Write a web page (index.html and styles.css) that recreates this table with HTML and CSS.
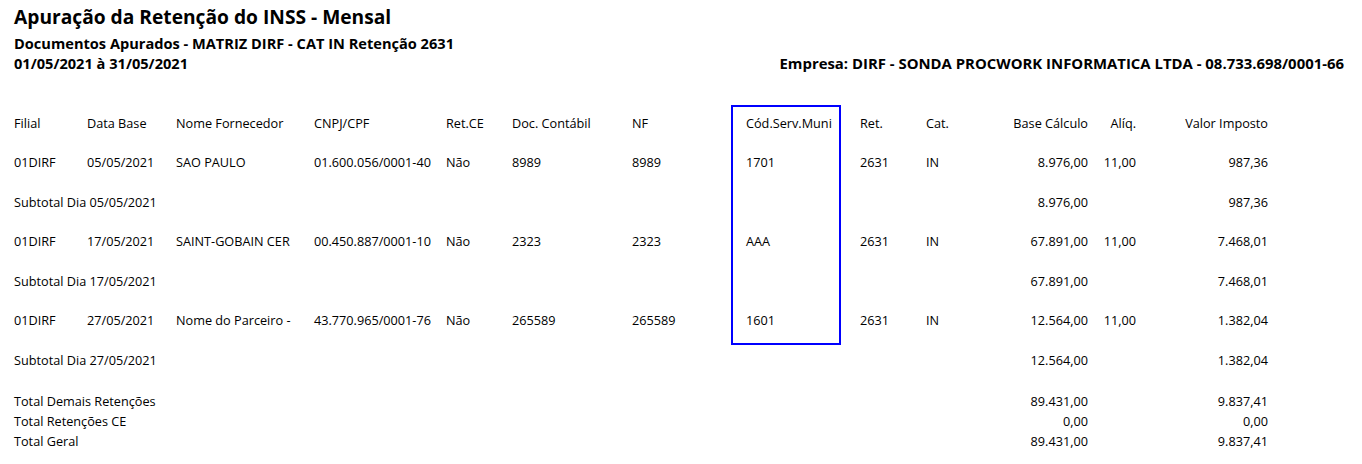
FILE: index.html
```html
<!DOCTYPE html>
<html lang="pt-BR">
<head>
<meta charset="utf-8">
<title>Apuração da Retenção do INSS - Mensal</title>
<link rel="stylesheet" href="styles.css">
</head>
<body>
<div class="page">
  <header class="head">
    <h1 class="title">Apuração da Retenção do INSS - Mensal</h1>
    <div class="sub">Documentos Apurados - MATRIZ DIRF - CAT IN Retenção 2631</div>
    <div class="line">
      <span>01/05/2021 à 31/05/2021</span>
      <span class="emp">Empresa: DIRF - SONDA PROCWORK INFORMATICA LTDA - 08.733.698/0001-66</span>
    </div>
  </header>

  <section class="table">
    <div class="hl"></div>
    <div class="row">
      <span>Filial</span><span>Data Base</span><span>Nome Fornecedor</span><span>CNPJ/CPF</span><span>Ret.CE</span><span>Doc. Contábil</span><span>NF</span><span>Cód.Serv.Muni</span><span>Ret.</span><span>Cat.</span><span class="r">Base Cálculo</span><span class="r">Alíq.</span><span class="r">Valor Imposto</span>
    </div>
    <div class="row">
      <span>01DIRF</span><span>05/05/2021</span><span>SAO PAULO</span><span>01.600.056/0001-40</span><span>Não</span><span>8989</span><span>8989</span><span>1701</span><span>2631</span><span>IN</span><span class="r">8.976,00</span><span class="r">11,00</span><span class="r">987,36</span>
    </div>
    <div class="row">
      <span class="span10">Subtotal Dia 05/05/2021</span><span class="r">8.976,00</span><span></span><span class="r">987,36</span>
    </div>
    <div class="row">
      <span>01DIRF</span><span>17/05/2021</span><span>SAINT-GOBAIN CER</span><span>00.450.887/0001-10</span><span>Não</span><span>2323</span><span>2323</span><span>AAA</span><span>2631</span><span>IN</span><span class="r">67.891,00</span><span class="r">11,00</span><span class="r">7.468,01</span>
    </div>
    <div class="row">
      <span class="span10">Subtotal Dia 17/05/2021</span><span class="r">67.891,00</span><span></span><span class="r">7.468,01</span>
    </div>
    <div class="row">
      <span>01DIRF</span><span>27/05/2021</span><span>Nome do Parceiro -</span><span>43.770.965/0001-76</span><span>Não</span><span>265589</span><span>265589</span><span>1601</span><span>2631</span><span>IN</span><span class="r">12.564,00</span><span class="r">11,00</span><span class="r">1.382,04</span>
    </div>
    <div class="row">
      <span class="span10">Subtotal Dia 27/05/2021</span><span class="r">12.564,00</span><span></span><span class="r">1.382,04</span>
    </div>

    <div class="totals">
      <div class="row trow">
        <span class="span10">Total Demais Retenções</span><span class="r">89.431,00</span><span></span><span class="r">9.837,41</span>
      </div>
      <div class="row trow">
        <span class="span10">Total Retenções CE</span><span class="r">0,00</span><span></span><span class="r">0,00</span>
      </div>
      <div class="row trow">
        <span class="span10">Total Geral</span><span class="r">89.431,00</span><span></span><span class="r">9.837,41</span>
      </div>
    </div>
  </section>
</div>
</body>
</html>
```

FILE: styles.css
```css
html, body {
  margin: 0;
  padding: 0;
  background: #fff;
}
body {
  font-family: "Open Sans", "Noto Sans", "Liberation Sans", sans-serif;
  color: #000;
  font-size: 12.7px;
}
.page {
  padding: 0 18px 0 14px;
}
.head {
  display: flex;
  flex-direction: column;
}
.title {
  margin: 0;
  font-size: 19.2px;
  font-weight: 700;
  line-height: 34px;
}
.sub {
  font-weight: 700;
  font-size: 14.6px;
  line-height: 19.5px;
}
.line {
  display: flex;
  justify-content: space-between;
  align-items: baseline;
  font-weight: 700;
  font-size: 14.6px;
  line-height: 19.5px;
}
.emp {
  font-size: 14.9px;
}
.table {
  position: relative;
  margin-top: 30px;
}
.hl {
  position: absolute;
  left: 717px;
  top: 2px;
  width: 106px;
  height: 236px;
  border: 2px solid #0000ff;
}
.row {
  display: grid;
  grid-template-columns: 73px 89px 138px 132px 66px 120px 114px 114px 66px 64px 98px 48px 132px;
  height: 39.5px;
  align-items: center;
  white-space: nowrap;
}
.row .r {
  text-align: right;
}
.span10 {
  grid-column: 1 / span 10;
}
.totals {
  margin-top: 11px;
}
.trow {
  height: 20px;
}
```
